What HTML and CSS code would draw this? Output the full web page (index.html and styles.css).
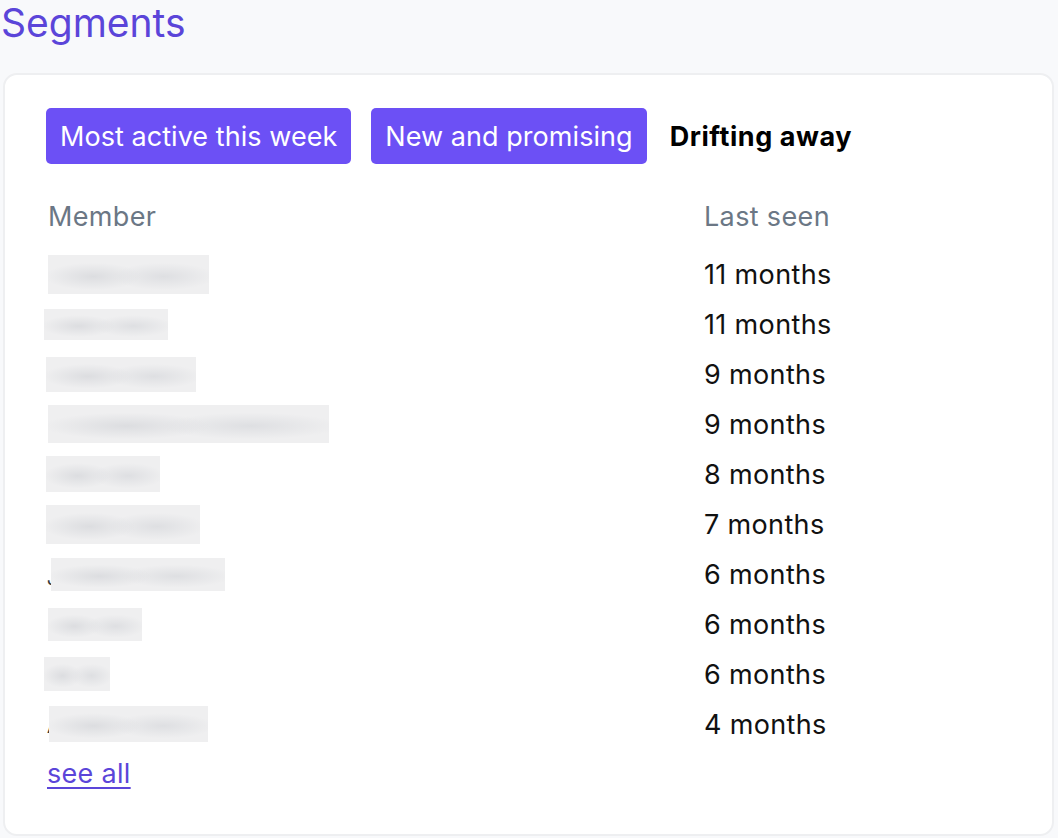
FILE: index.html
```html
<!DOCTYPE html>
<html lang="en">
<head>
<meta charset="utf-8">
<title>Segments</title>
<link rel="stylesheet" href="styles.css">
</head>
<body>
<h1 class="title">Segments</h1>
<section class="card">
  <div class="tabs">
    <button class="tab tab-link">Most active this week</button>
    <button class="tab tab-link">New and promising</button>
    <button class="tab tab-current">Drifting away</button>
  </div>
  <div class="table">
    <div class="row head">
      <div class="cell">Member</div>
      <div class="cell">Last seen</div>
    </div>
    <div class="row"><div class="cell"><span class="blur" style="width:161px;height:39px;margin-left:0"></span></div><div class="cell">11 months</div></div>
    <div class="row"><div class="cell"><span class="blur" style="width:124px;height:31px;margin-left:-4px"></span></div><div class="cell">11 months</div></div>
    <div class="row"><div class="cell"><span class="blur" style="width:150px;height:35px;margin-left:-2px"></span></div><div class="cell">9 months</div></div>
    <div class="row"><div class="cell"><span class="blur" style="width:281px;height:38px;margin-left:0"></span></div><div class="cell">9 months</div></div>
    <div class="row"><div class="cell"><span class="blur" style="width:114px;height:36px;margin-left:-2px"></span></div><div class="cell">8 months</div></div>
    <div class="row"><div class="cell"><span class="blur" style="width:154px;height:39px;margin-left:-2px"></span></div><div class="cell">7 months</div></div>
    <div class="row"><div class="cell"><span class="mark">J</span><span class="blur" style="width:174px;height:33px;margin-left:3px"></span></div><div class="cell">6 months</div></div>
    <div class="row"><div class="cell"><span class="blur" style="width:94px;height:33px;margin-left:0"></span></div><div class="cell">6 months</div></div>
    <div class="row"><div class="cell"><span class="blur" style="width:66px;height:34px;margin-left:-4px"></span></div><div class="cell">6 months</div></div>
    <div class="row"><div class="cell"><span class="mark">A</span><span class="blur" style="width:159px;height:36px;margin-left:1px"></span></div><div class="cell">4 months</div></div>
  </div>
  <a class="see-all" href="#">see all</a>
</section>
</body>
</html>
```

FILE: styles.css
```css
* { box-sizing: border-box; }
html, body { margin: 0; padding: 0; }
body {
  background: #f8f9fb;
  font-family: Inter, "Noto Sans", "Liberation Sans", sans-serif;
  color: #111;
  width: 1058px;
  height: 838px;
  overflow: hidden;
}
.title {
  margin: 0;
  padding: 0 0 0 1px;
  height: 73px;
  font-size: 39px;
  font-weight: 400;
  line-height: 46px;
  color: #5b45d9;
  letter-spacing: 0;
}
.card {
  margin: 0 0 0 3px;
  width: 1051px;
  height: 763px;
  background: #fff;
  border: 2px solid #eeeff1;
  border-radius: 14px;
  padding: 33px 0 0 41px;
}
.tabs {
  display: flex;
  align-items: center;
  gap: 20px;
  height: 56px;
}
.tab {
  font-family: inherit;
  font-size: 27px;
  letter-spacing: 0.05px;
  line-height: 58px;
  height: 56px;
  border: 0;
  padding: 0 14px;
  border-radius: 5px;
  cursor: pointer;
}
.tab-link {
  background: #6c50f5;
  color: #fff;
}
.tab-current {
  background: transparent;
  color: #000;
  font-weight: 700;
  letter-spacing: 0.55px;
  padding: 0 0 0 3px;
}
.table {
  margin-top: 27px;
  display: flex;
  flex-direction: column;
}
.row {
  display: grid;
  grid-template-columns: 656px 1fr;
  height: 50px;
  align-items: center;
  font-size: 27px;
  letter-spacing: 0.35px;
}
.row.head {
  color: #6b7785;
  margin-bottom: 8px;
}
.cell {
  padding-left: 2px;
  display: flex;
  align-items: center;
  position: relative;
}
.blur {
  display: inline-block;
  position: relative;
  z-index: 1;
  background:
    radial-gradient(ellipse 30% 35% at 28% 55%, #dcdde0 0%, rgba(220,221,224,0) 100%),
    radial-gradient(ellipse 32% 35% at 72% 55%, #dedfe2 0%, rgba(222,223,226,0) 100%),
    #efeff0;
  filter: blur(0.6px);
}
.mark {
  position: absolute;
  left: 1px;
  top: 12px;
  font-size: 18px;
  color: #333;
  line-height: 1;
  z-index: 0;
}
.see-all {
  display: inline-block;
  margin-top: 10px;
  margin-left: 1px;
  font-size: 27px;
  letter-spacing: 0.3px;
  line-height: 30px;
  color: #5b45d9;
  text-decoration: underline;
  text-underline-offset: 4px;
}
```
